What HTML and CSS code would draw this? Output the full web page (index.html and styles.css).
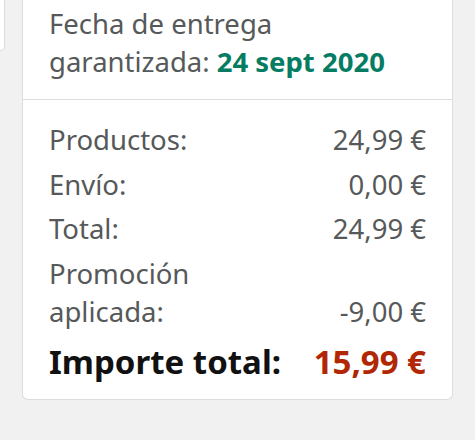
FILE: index.html
```html
<!DOCTYPE html>
<html lang="es">
<head>
<meta charset="utf-8">
<link rel="stylesheet" href="styles.css">
</head>
<body>
<div class="page">
  <div class="prev-card"></div>
  <section class="card">
    <div class="delivery">
      <span class="delivery-line">Fecha de entrega</span>
      <span class="delivery-line second"><span>garantizada:</span><span class="date">24 sept 2020</span></span>
    </div>
    <div class="summary">
      <div class="row"><span class="label">Productos:</span><span class="value">24,99 €</span></div>
      <div class="row"><span class="label">Envío:</span><span class="value">0,00 €</span></div>
      <div class="row"><span class="label">Total:</span><span class="value">24,99 €</span></div>
      <div class="row"><span class="label narrow">Promoción aplicada:</span><span class="value">-9,00 €</span></div>
      <div class="row grand"><span class="label">Importe total:</span><span class="value">15,99 €</span></div>
    </div>
  </section>
</div>
</body>
</html>
```

FILE: styles.css
```css
html, body {
  margin: 0;
  padding: 0;
  background: #f1f1f1;
}
body {
  font-family: "Noto Sans", "Open Sans", sans-serif;
  color: #565959;
  width: 475px;
  height: 440px;
  overflow: hidden;
}
.page {
  display: flex;
  align-items: flex-start;
}
.prev-card {
  width: 4px;
  height: 50px;
  background: #fff;
  border: 1px solid #dcdcdc;
  border-left: none;
  border-top: none;
  border-bottom-right-radius: 5px;
  flex: none;
}
.card {
  margin-left: 17px;
  width: 429px;
  background: #fff;
  border: 1px solid #dddddd;
  border-top: none;
  border-radius: 0 0 6px 6px;
}
.delivery {
  display: flex;
  flex-direction: column;
  font-size: 27.5px;
  line-height: 38px;
  padding: 5px 26px 18px 26px;
  border-bottom: 1px solid #dddddd;
}
.delivery-line.second {
  display: flex;
  gap: 7px;
}
.date {
  color: #067d62;
  font-weight: 700;
}
.summary {
  padding: 21px 26px 15px 26px;
  display: flex;
  flex-direction: column;
  gap: 6.5px;
}
.row {
  display: flex;
  justify-content: space-between;
  align-items: flex-end;
  font-size: 27.5px;
  line-height: 38px;
}
.narrow {
  width: 170px;
}
.grand {
  margin-top: 3px;
  font-size: 33px;
  line-height: 44px;
  font-weight: 700;
  color: #111;
}
.grand .value {
  color: #b12704;
}
```
